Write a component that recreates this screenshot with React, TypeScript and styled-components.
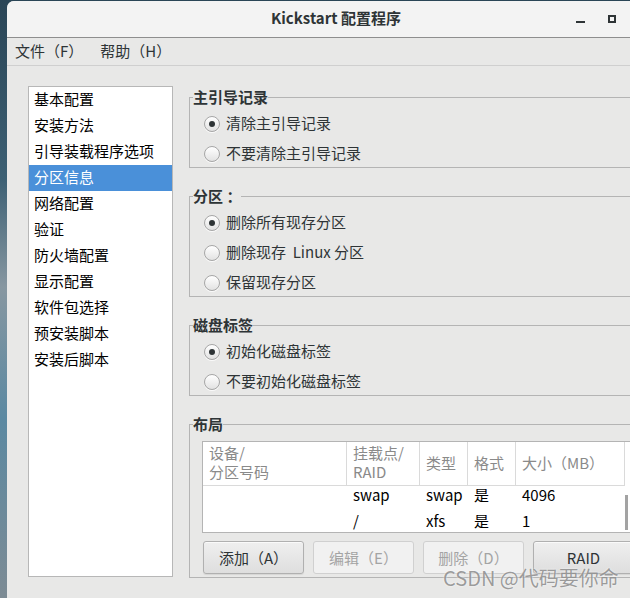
import styled, { createGlobalStyle } from 'styled-components';

const GlobalStyle = createGlobalStyle`
  html, body {
    margin: 0;
    padding: 0;
  }
  body {
    width: 630px;
    height: 598px;
    overflow: hidden;
    background: linear-gradient(
      180deg,
      #2a4556 0%,
      #3d6074 30%,
      #8797a1 48%,
      #5b89a2 70%,
      #7d8b94 100%
    );
    font-family: 'Noto Sans CJK SC', 'DejaVu Sans', sans-serif;
  }
`;

const Window = styled.div`
  position: relative;
  margin: 1px 0 0 7px;
  width: 658px;
  height: 620px;
  background: #e8e8e7;
  border-radius: 7px 7px 0 0;
  overflow: hidden;
`;

const TitleBar = styled.div`
  height: 36px;
  display: grid;
  grid-template-columns: 1fr auto 1fr;
  align-items: center;
  background: #f3f3f3;
  border-bottom: 1px solid #8e8e8e;
`;

const Title = styled.div`
  grid-column: 2;
  padding-bottom: 3px;
  font-size: 15px;
  font-weight: 700;
  color: #2e3436;
`;

const Controls = styled.div`
  grid-column: 3;
  justify-self: end;
  display: flex;
  padding-right: 5px;
`;

const ControlButton = styled.div`
  width: 32px;
  height: 36px;
  display: flex;
  align-items: center;
  justify-content: center;
`;

const MinGlyph = styled.span`
  width: 9px;
  height: 2px;
  margin-top: 6px;
  background: #2e3436;
`;

const MaxGlyph = styled.span`
  width: 8px;
  height: 8px;
  box-sizing: border-box;
  border: 2px solid #2e3436;
`;

const MenuBar = styled.div`
  height: 27px;
  display: flex;
  align-items: center;
  gap: 17px;
  padding-left: 8px;
  border-bottom: 1px solid #cfcfcf;
`;

const MenuItem = styled.span`
  font-size: 15px;
  line-height: 20px;
  padding-bottom: 2px;
  color: #2e3436;
`;

const Main = styled.div`
  display: flex;
  align-items: flex-start;
  gap: 16px;
  padding: 20px 0 0 21px;
`;

const NavList = styled.div`
  width: 145px;
  height: 491px;
  box-sizing: border-box;
  background: #fff;
  border: 1px solid #b7b7b7;
`;

const NavItem = styled.div<{ selected?: boolean }>`
  height: 26px;
  line-height: 24px;
  padding-left: 5px;
  font-size: 15px;
  color: ${({ selected }) => (selected ? '#ffffff' : '#000000')};
  background: ${({ selected }) => (selected ? '#4a90d9' : 'transparent')};
`;

const RightPanel = styled.div`
  width: 460px;
  display: flex;
  flex-direction: column;
  gap: 17px;
`;

const Group = styled.fieldset`
  margin: 0;
  padding: 0 0 1px 0;
  min-width: 0;
  border: 1px solid #b4b4b4;
`;

const Legend = styled.legend`
  margin-left: 3px;
  padding: 0;
  font-size: 15px;
  font-weight: 700;
  line-height: 22px;
  color: #2e3436;
`;

const Options = styled.div`
  display: flex;
  flex-direction: column;
  gap: 6px;
  padding-top: 4px;
`;

const RadioRow = styled.div`
  height: 24px;
  display: flex;
  align-items: center;
  gap: 6px;
  padding-left: 14px;
  font-size: 15px;
  color: #2e3436;
`;

const RadioLabel = styled.span`
  white-space: pre;
  line-height: 20px;
  padding-bottom: 2px;
`;

const RadioDot = styled.span<{ checked?: boolean }>`
  width: 16px;
  height: 16px;
  box-sizing: border-box;
  border-radius: 50%;
  border: 1px solid #a6a6a6;
  background: linear-gradient(180deg, #ffffff 0%, #e2e2e2 100%);
  box-shadow: 0 1px 0 rgba(255, 255, 255, 0.8);
  display: flex;
  align-items: center;
  justify-content: center;

  &::after {
    content: '';
    width: 6px;
    height: 6px;
    border-radius: 50%;
    background: ${({ checked }) => (checked ? '#2e3436' : 'transparent')};
  }
`;

const LayoutBody = styled.div`
  padding: 6px 0 2px 12px;
`;

const TableFrame = styled.div`
  width: 445px;
  height: 92px;
  box-sizing: border-box;
  display: flex;
  border: 1px solid #b4b4b4;
  border-right: none;
  background: #fff;
`;

const Grid = styled.div`
  display: grid;
  grid-template-columns: 144px 73px 48px 48px 109px;
  grid-template-rows: 44px;
  grid-auto-rows: 26px;
  overflow: hidden;
`;

const HeadCell = styled.div`
  box-sizing: border-box;
  display: flex;
  align-items: center;
  padding: 0 6px 3px;
  border-right: 1px solid #dadada;
  border-bottom: 1px solid #dadada;
  font-size: 15px;
  line-height: 19px;
  color: #8a8a8a;
  white-space: nowrap;
`;

const Cell = styled.div`
  padding: 0 6px;
  font-size: 15px;
  line-height: 18px;
  color: #000;
  white-space: nowrap;
`;

const Scrollbar = styled.div`
  flex: 1;
  padding-top: 53px;
`;

const Thumb = styled.div`
  width: 3px;
  height: 35px;
  background: #a3a3a3;
`;

const ButtonRow = styled.div`
  display: flex;
  gap: 9px;
  margin: 8px 0 0 1px;
`;

const Button = styled.div<{ disabled?: boolean }>`
  width: 101px;
  height: 33px;
  box-sizing: border-box;
  flex-shrink: 0;
  display: flex;
  align-items: center;
  justify-content: center;
  border-radius: 3px;
  font-size: 15px;
  border: 1px solid ${({ disabled }) => (disabled ? '#d0d0d0' : '#b0b0b0')};
  color: ${({ disabled }) => (disabled ? '#a4a4a4' : '#2e3436')};
  background: ${({ disabled }) =>
    disabled ? '#f1f1f1' : 'linear-gradient(180deg, #efefef 0%, #dedede 100%)'};
  box-shadow: ${({ disabled }) =>
    disabled ? 'none' : 'inset 0 1px 0 rgba(255,255,255,0.7), 0 1px 1px rgba(0,0,0,0.08)'};
`;

const Watermark = styled.div`
  position: absolute;
  left: 436px;
  top: 565px;
  font-size: 20px;
  line-height: 24px;
  color: rgba(125, 125, 125, 0.75);
  text-shadow: 0 0 2px rgba(255, 255, 255, 0.9);
  white-space: nowrap;
`;

const navItems = [
  '基本配置',
  '安装方法',
  '引导装载程序选项',
  '分区信息',
  '网络配置',
  '验证',
  '防火墙配置',
  '显示配置',
  '软件包选择',
  '预安装脚本',
  '安装后脚本',
];

const groups = [
  { title: '主引导记录', options: ['清除主引导记录', '不要清除主引导记录'] },
  { title: '分区 ：', options: ['删除所有现存分区', '删除现存  Linux 分区', '保留现存分区'] },
  { title: '磁盘标签', options: ['初始化磁盘标签', '不要初始化磁盘标签'] },
];

const rows = [
  ['', 'swap', 'swap', '是', '4096'],
  ['', '/', 'xfs', '是', '1'],
];

const App = () => {
  return (
    <>
      <GlobalStyle />
      <Window>
        <TitleBar>
          <Title>Kickstart 配置程序</Title>
          <Controls>
            <ControlButton>
              <MinGlyph />
            </ControlButton>
            <ControlButton>
              <MaxGlyph />
            </ControlButton>
            <ControlButton>
              <svg width="10" height="10" viewBox="0 0 10 10">
                <path d="M1 1L9 9M9 1L1 9" stroke="#2e3436" strokeWidth="2" />
              </svg>
            </ControlButton>
          </Controls>
        </TitleBar>
        <MenuBar>
          <MenuItem>文件（F）</MenuItem>
          <MenuItem>帮助（H）</MenuItem>
        </MenuBar>
        <Main>
          <NavList>
            {navItems.map((item) => (
              <NavItem key={item} selected={item === '分区信息'}>
                {item}
              </NavItem>
            ))}
          </NavList>
          <RightPanel>
            {groups.map((group) => (
              <Group key={group.title}>
                <Legend>{group.title}</Legend>
                <Options>
                  {group.options.map((option, i) => (
                    <RadioRow key={option}>
                      <RadioDot checked={i === 0} />
                      <RadioLabel>{option}</RadioLabel>
                    </RadioRow>
                  ))}
                </Options>
              </Group>
            ))}
            <Group>
              <Legend>布局</Legend>
              <LayoutBody>
                <TableFrame>
                  <Grid>
                    <HeadCell>
                      设备/
                      <br />
                      分区号码
                    </HeadCell>
                    <HeadCell>
                      挂载点/
                      <br />
                      RAID
                    </HeadCell>
                    <HeadCell>类型</HeadCell>
                    <HeadCell>格式</HeadCell>
                    <HeadCell>大小（MB）</HeadCell>
                    {rows.map((row, r) =>
                      row.map((value, c) => <Cell key={`${r}-${c}`}>{value}</Cell>),
                    )}
                  </Grid>
                  <Scrollbar>
                    <Thumb />
                  </Scrollbar>
                </TableFrame>
                <ButtonRow>
                  <Button>添加（A）</Button>
                  <Button disabled>编辑（E）</Button>
                  <Button disabled>删除（D）</Button>
                  <Button>RAID</Button>
                </ButtonRow>
              </LayoutBody>
            </Group>
          </RightPanel>
        </Main>
        <Watermark>CSDN @代码要你命</Watermark>
      </Window>
    </>
  );
};

export default App;
